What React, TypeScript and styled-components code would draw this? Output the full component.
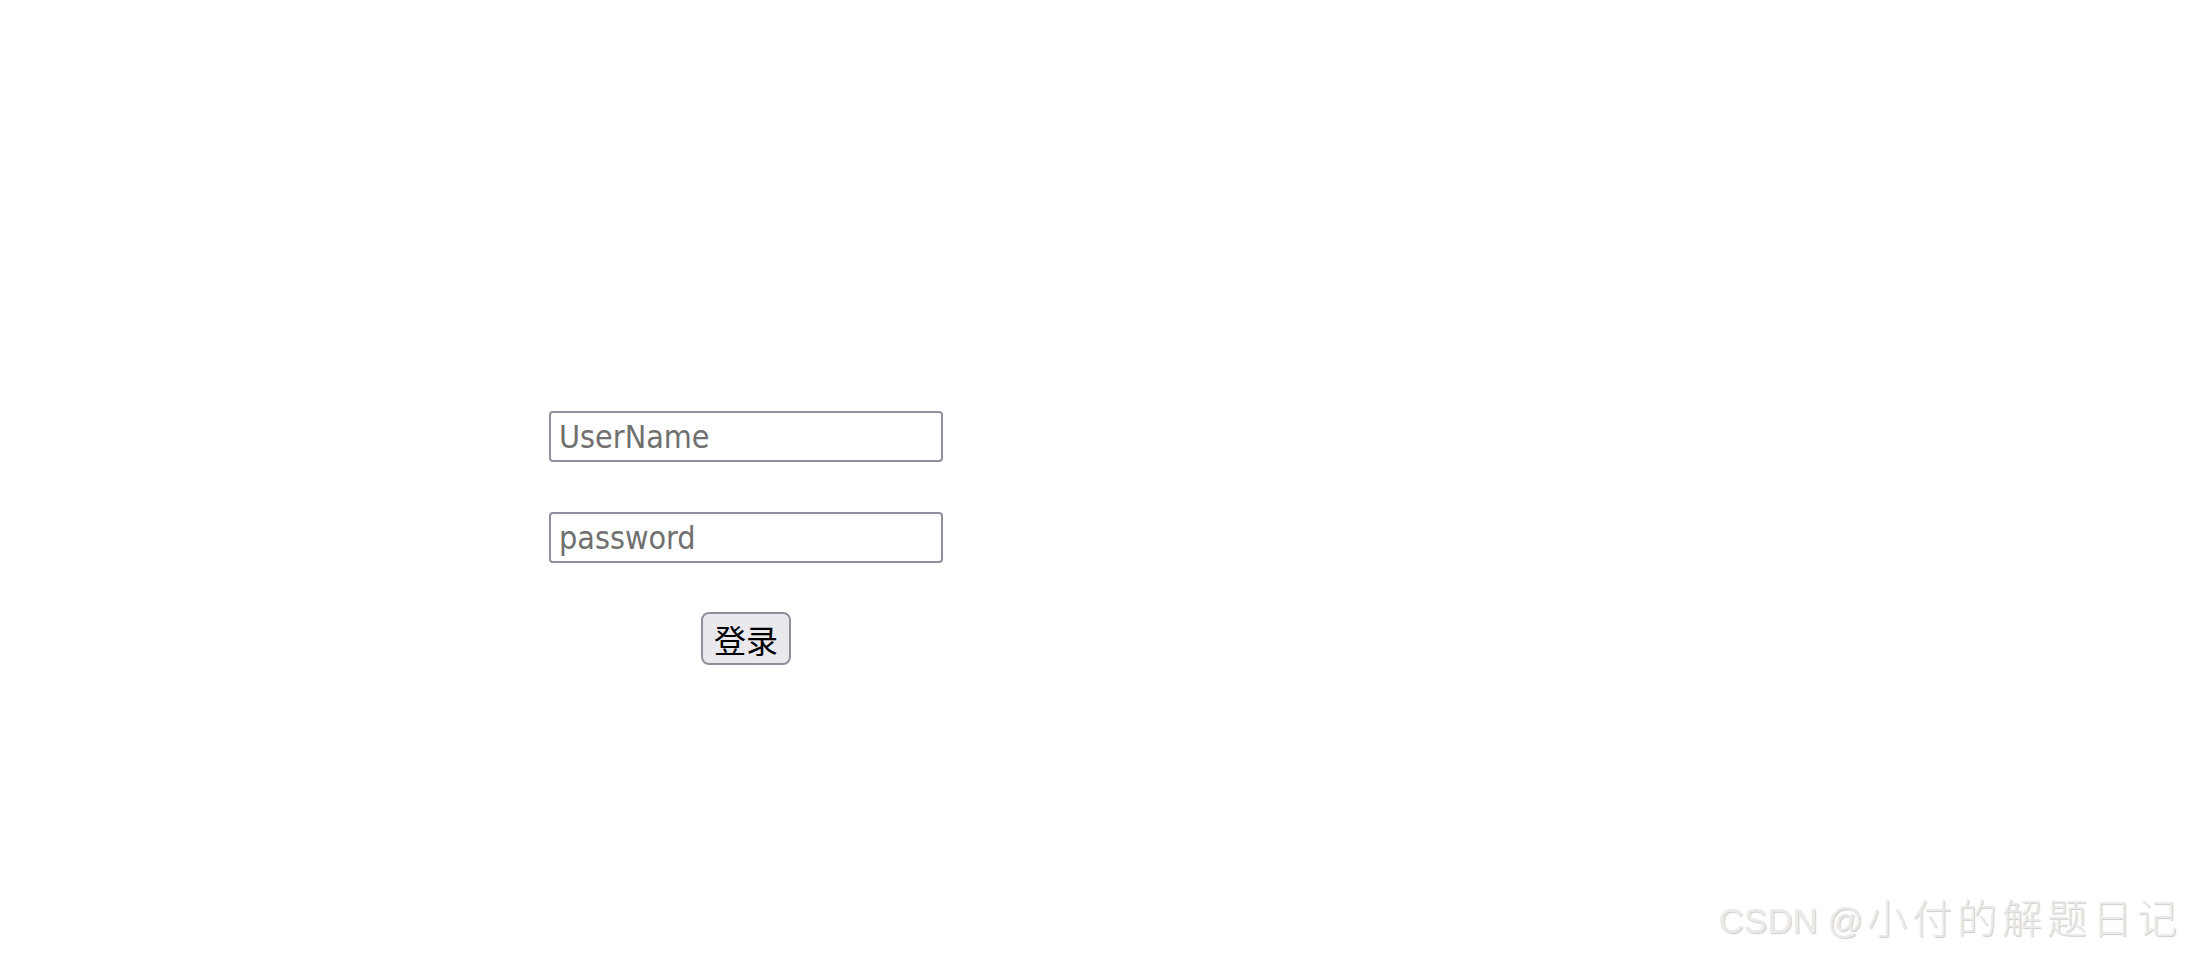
import React from "react";
import styled, { createGlobalStyle } from "styled-components";

const Global = createGlobalStyle`
  html, body { margin: 0; padding: 0; background: #fff; }
  body { width: 2185px; height: 962px; overflow: hidden; position: relative; }
`;

const Page = styled.div`
  width: 2185px;
  height: 962px;
  box-sizing: border-box;
  padding: 411px 0 0 549px;
`;

const Form = styled.form`
  display: flex;
  flex-direction: column;
  align-items: center;
  width: 394px;
  gap: 50px;
`;

const Field = styled.input`
  box-sizing: border-box;
  width: 394px;
  height: 51px;
  border: 2px solid #8f8f9d;
  border-radius: 4px;
  padding: 0 8px;
  font-family: "DejaVu Sans Condensed", "DejaVu Sans", sans-serif;
  font-size: 32px;
  color: #222;
  background: #fff;
  outline: none;
  &::placeholder { color: #707070; }
`;

const Submit = styled.button`
  box-sizing: border-box;
  width: 90px;
  height: 53px;
  margin-top: -1px;
  border: 2px solid #8f8f9d;
  border-radius: 8px;
  background: #e9e9ed;
  color: #000;
  font-family: "Noto Sans CJK SC", sans-serif;
  font-size: 32px;
  line-height: 1;
  padding: 0;
`;

const Watermark = styled.div`
  position: absolute;
  right: 8px;
  bottom: 17px;
  display: flex;
  align-items: baseline;
  color: #eaeaea;
  text-shadow: 1px 1px 1px rgba(0, 0, 0, 0.2);
  white-space: nowrap;
`;

const Latin = styled.span`
  font-family: "Liberation Sans", Arial, sans-serif;
  font-size: 35px;
  margin-right: 4px;
`;

const Han = styled.span`
  font-family: "Noto Sans CJK SC", sans-serif;
  font-size: 40px;
  font-weight: 300;
  letter-spacing: 5px;
  margin-right: -5px;
`;

export default function App() {
  return (
    <>
      <Global />
      <Page>
        <Form onSubmit={(e) => e.preventDefault()}>
          <Field type="text" placeholder="UserName" />
          <Field type="password" placeholder="password" />
          <Submit type="submit">登录</Submit>
        </Form>
      </Page>
      <Watermark>
        <Latin>CSDN @</Latin>
        <Han>小付的解题日记</Han>
      </Watermark>
    </>
  );
}
